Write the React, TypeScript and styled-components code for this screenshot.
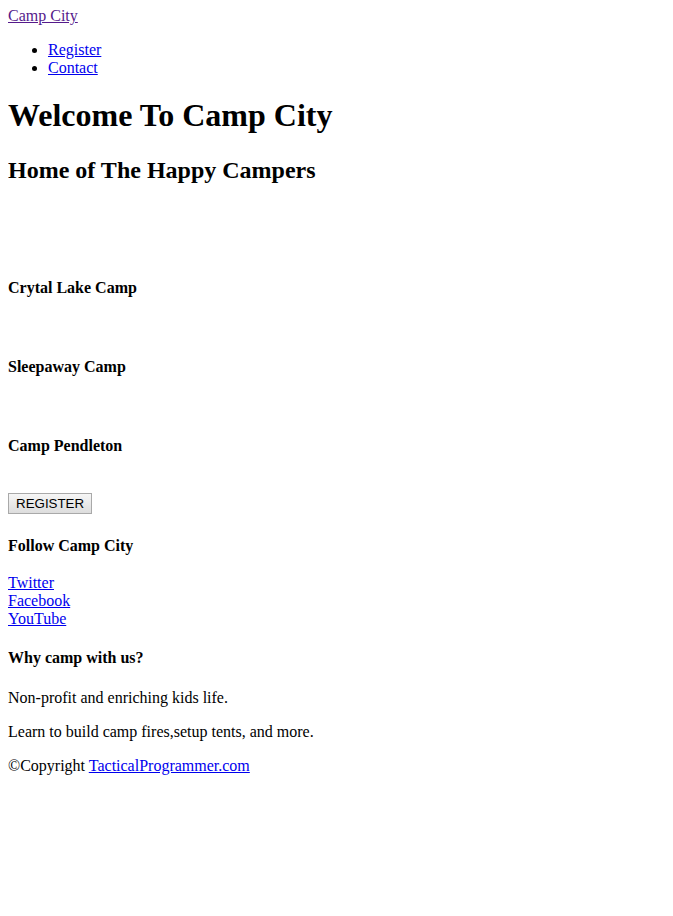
import React from "react";
import styled, { createGlobalStyle } from "styled-components";

const Global = createGlobalStyle`
  html, body { background: #fff; }
  body {
    margin: 8px;
    font-family: "Liberation Serif", "Times New Roman", serif;
    font-size: 16px;
    color: #000;
  }
`;

const Link = styled.a<{ $visited?: boolean }>`
  color: ${(p) => (p.$visited ? "#551a8b" : "#0000ee")};
  text-decoration: underline;
`;

const Header = styled.header`
  margin-top: -1px;
`;

const NavList = styled.ul`
  margin: 16px 0;
  padding-left: 40px;
  list-style: disc;
`;

const Title = styled.h1`
  font-size: 32px;
  margin: 20px 0 0;
  font-weight: bold;
`;

const Subtitle = styled.h2`
  font-size: 24px;
  margin: 22.5px 0 19.92px;
  font-weight: bold;
`;

const Camps = styled.section`
  padding-top: 54px;
`;

const Camp = styled.div``;

const CampPicture = styled.div`
  height: 18.5px;
`;

const SmallHeading = styled.h4<{ $extraTop?: number; $trimBottom?: number }>`
  font-size: 16px;
  margin: ${(p) => 21.28 + (p.$extraTop ?? 0)}px 0
    ${(p) => 21.28 - (p.$trimBottom ?? 0)}px;
  font-weight: bold;
`;

const ButtonRow = styled.div`
  padding-top: 16.5px;
`;

const Button = styled.button`
  font-family: Arial, "Liberation Sans", sans-serif;
  font-size: 13.33px;
  color: #000;
  padding: 2px 7px;
  border: 1px solid #a9a9a9;
  border-radius: 0;
  background: linear-gradient(#f6f6f6, #dddddd);
  line-height: 15px;
  height: 21px;
  width: 84px;
`;

const LinkStack = styled.div`
  display: flex;
  flex-direction: column;
  align-items: flex-start;
  margin-bottom: 2px;
`;

const Text = styled.p`
  margin: 16px 0;
`;

const camps = ["Crytal Lake Camp", "Sleepaway Camp", "Camp Pendleton"];

export default function App() {
  return (
    <>
      <Global />
      <Header>
        <div>
          <Link href="#" $visited>Camp City</Link>
        </div>
        <NavList>
          <li><Link href="#">Register</Link></li>
          <li><Link href="#">Contact</Link></li>
        </NavList>
      </Header>
      <Title>Welcome To Camp City</Title>
      <Subtitle>Home of The Happy Campers</Subtitle>
      <Camps>
        {camps.map((c, i) => (
          <Camp key={c}>
            {i > 0 && <CampPicture />}
            <SmallHeading>{c}</SmallHeading>
          </Camp>
        ))}
      </Camps>
      <ButtonRow>
        <Button>REGISTER</Button>
      </ButtonRow>
      <footer>
        <SmallHeading $extraTop={2} $trimBottom={2}>Follow Camp City</SmallHeading>
        <LinkStack>
          <Link href="#">Twitter</Link>
          <Link href="#">Facebook</Link>
          <Link href="#">YouTube</Link>
        </LinkStack>
        <SmallHeading>Why camp with us?</SmallHeading>
        <Text>Non-profit and enriching kids life.</Text>
        <Text>Learn to build camp fires,setup tents, and more.</Text>
        <Text>
          ©Copyright <Link href="#">TacticalProgrammer.com</Link>
        </Text>
      </footer>
    </>
  );
}
